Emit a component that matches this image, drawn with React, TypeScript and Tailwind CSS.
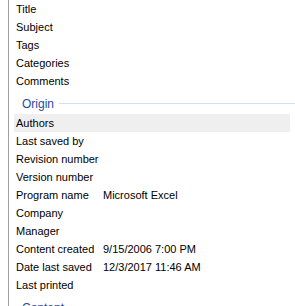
const rowsTop: [string, string?][] = [
  ["Title"],
  ["Subject"],
  ["Tags"],
  ["Categories"],
  ["Comments"],
];

const rowsOrigin: [string, string?][] = [
  ["Authors"],
  ["Last saved by"],
  ["Revision number"],
  ["Version number"],
  ["Program name", "Microsoft Excel"],
  ["Company"],
  ["Manager"],
  ["Content created", "9/15/2006 7:00 PM"],
  ["Date last saved", "12/3/2017 11:46 AM"],
  ["Last printed"],
];

function Row({ label, value, active }: { label: string; value?: string; active?: boolean }) {
  return (
    <div
      className={`flex h-[18px] items-center pl-[2px] mr-[5px] ${active ? "bg-[#efefef]" : ""}`}
    >
      <span className="w-[87px] shrink-0 whitespace-nowrap">{label}</span>
      {value && <span className="whitespace-nowrap">{value}</span>}
    </div>
  );
}

function Section({ title }: { title: string }) {
  return (
    <div className="flex h-[24px] items-center pl-[8px] pt-[3px]">
      <span className="text-[#1f4a9f] pr-[5px] text-[12px]">{title}</span>
      <div className="h-px flex-1 bg-[#d5dff0]" />
    </div>
  );
}

export default function App() {
  return (
    <div
      className="h-[306px] w-[295px] overflow-hidden bg-white text-[11px] text-black"
      style={{ fontFamily: '"Liberation Sans", Arial, sans-serif' }}
    >
      <div className="ml-[8px] h-full border-l border-[#a0a0a0] pl-[5px]">
        {rowsTop.map(([l, v]) => (
          <Row key={l} label={l} value={v} />
        ))}
        <Section title="Origin" />
        {rowsOrigin.map(([l, v], i) => (
          <Row key={l} label={l} value={v} active={i === 0} />
        ))}
        <Section title="Content" />
      </div>
    </div>
  );
}
